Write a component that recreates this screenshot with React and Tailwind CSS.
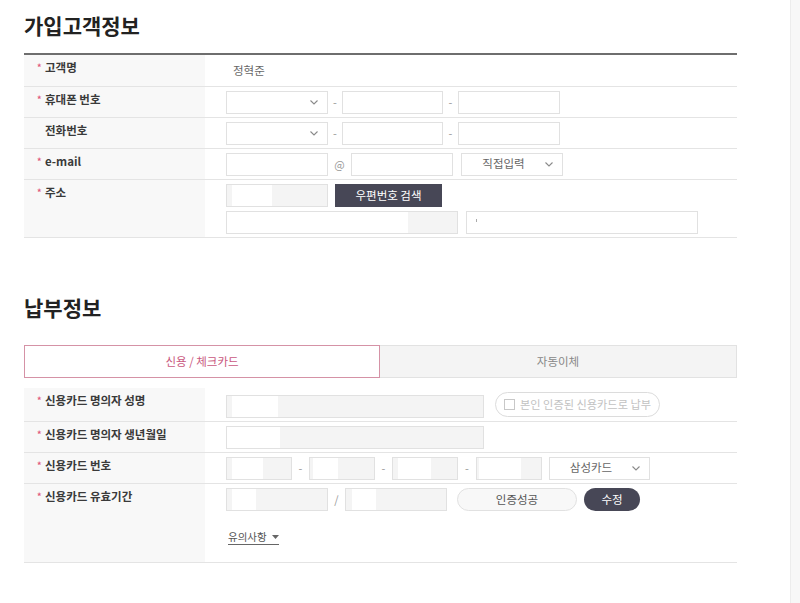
import React from 'react';

function Chevron() {
  return (
    <svg width="8" height="5" viewBox="0 0 8 5" className="shrink-0">
      <path d="M0.5 0.5L4 4L7.5 0.5" fill="none" stroke="#8a8a8a" strokeWidth="1.1" />
    </svg>
  );
}

function Select({ className = '', text = '' }) {
  return (
    <div className={`h-[23px] flex items-center border border-[#e1e1e1] bg-white ${className}`}>
      <span className="flex-1 text-center text-[11.5px] text-[#666]">{text}</span>
      <span className="mr-[9px] flex items-center">
        <Chevron />
      </span>
    </div>
  );
}

function Sep({ children, className = 'w-[14px]' }) {
  return <span className={`text-center text-[11px] text-[#999] ${className}`}>{children}</span>;
}

function Row({ label, required = true, children, className = 'h-[30px] items-center' }) {
  return (
    <div className="flex border-b border-[#e4e4e4]">
      <div className="w-[181px] shrink-0 bg-[#f8f8f8] pl-[13px] pt-[4px] text-[11.5px] leading-[17px] font-bold text-[#3a3a3a]">
        <span className="inline-block w-[8px] text-[9px] text-[#e05a7e] align-top">{required ? '*' : ''}</span>
        {label}
      </div>
      <div className={`flex flex-1 pl-[21px] ${className}`}>{children}</div>
    </div>
  );
}

export default function App() {
  return (
    <div className="flex min-h-screen bg-white font-['Noto_Sans_CJK_KR','Noto_Sans',sans-serif]">
      <div className="w-[790px] shrink-0 pl-[24px]">
        <div className="w-[713px]">
          {/* 가입고객정보 */}
          <div className="h-[53px] pt-[10px]">
            <h2 className="text-[21px] leading-[30px] font-bold text-[#222]">가입고객정보</h2>
          </div>
          <div className="border-t-2 border-[#6e6e6e]">
            <Row label="고객명" className="h-[31px] items-center">
              <span className="pl-[7px] text-[11.5px] text-[#666]">정혁준</span>
            </Row>
            <Row label="휴대폰 번호">
              <Select className="w-[102px]" />
              <Sep>-</Sep>
              <div className="h-[23px] w-[101px] border border-[#e1e1e1]" />
              <Sep className="w-[15px]">-</Sep>
              <div className="h-[23px] w-[102px] border border-[#e1e1e1]" />
            </Row>
            <Row label="전화번호" required={false}>
              <Select className="w-[102px]" />
              <Sep>-</Sep>
              <div className="h-[23px] w-[101px] border border-[#e1e1e1]" />
              <Sep className="w-[15px]">-</Sep>
              <div className="h-[23px] w-[102px] border border-[#e1e1e1]" />
            </Row>
            <Row label="e-mail">
              <div className="h-[23px] w-[102px] border border-[#e1e1e1]" />
              <Sep className="w-[23px]">@</Sep>
              <div className="h-[23px] w-[102px] border border-[#e1e1e1]" />
              <Select className="ml-[8px] w-[102px]" text="직접입력" />
            </Row>
            <Row label="주소" className="flex-col pt-[4px] pb-[3px] gap-[4px]">
              <div className="flex gap-[7px]">
                <div className="h-[23px] w-[102px] border border-[#e1e1e1] bg-[#f4f4f4] flex">
                  <div className="ml-[5px] h-full w-[40px] bg-white" />
                </div>
                <button className="h-[23px] w-[107px] bg-[#474756] text-[11.5px] text-white">우편번호 검색</button>
              </div>
              <div className="flex gap-[8px]">
                <div className="h-[23px] w-[232px] border border-[#e1e1e1] bg-[#f4f4f4] flex">
                  <div className="h-full w-[181px] bg-white" />
                </div>
                <div className="h-[23px] w-[232px] border border-[#e1e1e1] bg-white relative">
                  <div className="absolute left-[9px] top-[7px] h-[3px] w-[1px] bg-[#aaa]" />
                </div>
              </div>
            </Row>
          </div>

          {/* 납부정보 */}
          <div className="mt-[54px] mb-[23px]">
            <h2 className="text-[21px] leading-[30px] font-bold text-[#222]">납부정보</h2>
          </div>
          <div className="flex h-[33px]">
            <div className="flex w-[356px] items-center justify-center border border-[#d592a6] bg-white text-[11.5px] text-[#c9587e]">
              신용 / 체크카드
            </div>
            <div className="flex flex-1 items-center justify-center border border-l-0 border-[#e2e2e2] bg-[#f4f4f4] text-[11.5px] text-[#888]">
              자동이체
            </div>
          </div>

          <div className="mt-[10px]">
            <Row label="신용카드 명의자 성명" className="h-[33px] items-center">
              <div className="mt-[3px] flex h-[23px] w-[258px] border border-[#e1e1e1] bg-[#f4f4f4]">
                <div className="ml-[5px] h-full w-[46px] bg-white" />
              </div>
              <div className="ml-[11px] flex h-[25px] w-[165px] items-center rounded-full border border-[#dcdcdc] bg-white pl-[8px]">
                <span className="h-[11px] w-[11px] border border-[#c8c8c8]" />
                <span className="ml-[5px] text-[11.2px] text-[#c2c2c2]">본인 인증된 신용카드로 납부</span>
              </div>
            </Row>
            <Row label="신용카드 명의자 생년월일">
              <div className="flex h-[23px] w-[258px] border border-[#e1e1e1] bg-[#f4f4f4]">
                <div className="h-full w-[53px] bg-white" />
              </div>
            </Row>
            <Row label="신용카드 번호">
              <div className="flex h-[23px] w-[66px] border border-[#e1e1e1] bg-[#f4f4f4]">
                <div className="ml-[5px] h-full w-[31px] bg-white" />
              </div>
              <Sep className="w-[17px]">-</Sep>
              <div className="flex h-[23px] w-[66px] border border-[#e1e1e1] bg-[#f4f4f4]">
                <div className="ml-[3px] h-full w-[25px] bg-white" />
              </div>
              <Sep className="w-[17px]">-</Sep>
              <div className="flex h-[23px] w-[66px] border border-[#e1e1e1] bg-[#f4f4f4]">
                <div className="ml-[5px] h-full w-[33px] bg-white" />
              </div>
              <Sep className="w-[18px]">-</Sep>
              <div className="flex h-[23px] w-[66px] border border-[#e1e1e1] bg-[#f4f4f4]">
                <div className="ml-[2px] h-full w-[42px] bg-white" />
              </div>
              <Select className="ml-[7px] w-[101px] bg-[#f7f7f7]" text="삼성카드" />
            </Row>
            <Row label="신용카드 유효기간" className="h-[78px] flex-col pt-[4px]">
              <div className="flex items-center">
                <div className="flex h-[23px] w-[102px] border border-[#e1e1e1] bg-[#f4f4f4]">
                  <div className="ml-[5px] h-full w-[24px] bg-white" />
                </div>
                <Sep className="w-[17px]">/</Sep>
                <div className="flex h-[23px] w-[102px] border border-[#e1e1e1] bg-[#f4f4f4]">
                  <div className="ml-[6px] h-full w-[24px] bg-white" />
                </div>
                <div className="ml-[10px] flex h-[23px] w-[120px] items-center justify-center rounded-full border border-[#e1e1e1] bg-[#f8f8f8] text-[11.5px] text-[#555]">
                  인증성공
                </div>
                <div className="ml-[7px] flex h-[23px] w-[56px] items-center justify-center rounded-full bg-[#474756] text-[11.5px] text-white">
                  수정
                </div>
              </div>
              <div className="mt-[11px] ml-[2px]">
                <span className="inline-flex items-center gap-[5px] border-b border-[#666] text-[10.5px] leading-[15px] text-[#555]">
                  유의사항
                  <svg width="7" height="4" viewBox="0 0 7 4">
                    <path d="M0 0H7L3.5 4Z" fill="#666" />
                  </svg>
                </span>
              </div>
            </Row>
          </div>
        </div>
      </div>
      <div className="w-[10px] flex-1 border-l border-[#ececec] bg-[#f7f7f7]" />
    </div>
  );
}
